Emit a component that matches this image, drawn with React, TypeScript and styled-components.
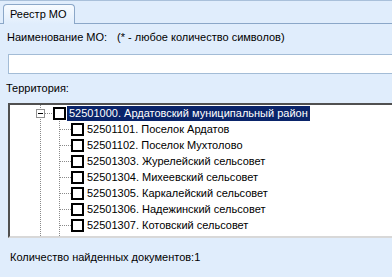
import styled, { createGlobalStyle } from "styled-components";

const GlobalStyle = createGlobalStyle`
  html, body {
    margin: 0;
    padding: 0;
    background: #e0edfc;
    overflow: hidden;
  }
  body {
    font-family: "Liberation Sans", Arial, sans-serif;
    font-size: 11px;
    color: #000;
  }
`;

const dotsV = (x: number) =>
  `repeating-linear-gradient(to bottom, #8a8a8a 0 1px, transparent 1px 2px) ${x}px 0 / 1px 100% no-repeat`;
const dotsH = (x: number, w: number) =>
  `repeating-linear-gradient(to right, #8a8a8a 0 1px, transparent 1px 2px) ${x}px 50% / ${w}px 1px no-repeat`;

const rootItem = "52501000. Ардатовский муниципальный район";
const children = [
  "52501101. Поселок Ардатов",
  "52501102. Поселок Мухтолово",
  "52501303. Журелейский сельсовет",
  "52501304. Михеевский сельсовет",
  "52501305. Каркалейский сельсовет",
  "52501306. Надежинский сельсовет",
  "52501307. Котовский сельсовет",
];

const App = () => {
  return (
    <Window>
      <GlobalStyle />
      <TabStrip>
        <Tab>Реестр МО</Tab>
      </TabStrip>
      <Page>
        <HintRow>
          <FieldLabel>Наименование МО:</FieldLabel>
          <span>(* - любое количество символов)</span>
        </HintRow>
        <SearchInput />
        <SectionLabel>Территория:</SectionLabel>
        <TreePanel>
          <Row>
            <Pad />
            <Expander>
              <ToggleBox>
                <Minus />
              </ToggleBox>
            </Expander>
            <CheckBox />
            <Label selected>{rootItem}</Label>
          </Row>
          {children.map((c) => (
            <Row key={c}>
              <Pad />
              <Guide />
              <Connector />
              <CheckBox />
              <Label>{c}</Label>
            </Row>
          ))}
          <Row>
            <Pad />
            <Guide />
            <Tail />
          </Row>
        </TreePanel>
        <Status>Количество найденных документов:1</Status>
      </Page>
    </Window>
  );
};

export default App;

const Window = styled.div`
  width: 430px;
  height: 277px;
  display: flex;
  flex-direction: column;
`;

const TabStrip = styled.div`
  height: 22px;
  border-top: 1px solid #a9c0da;
  border-bottom: 1px solid #8ba7c8;
  display: flex;
  align-items: flex-end;
  padding-left: 3px;
`;

const Tab = styled.div`
  height: 19px;
  margin-bottom: -1px;
  padding: 0 7px 0 6px;
  border: 1px solid #8ba7c8;
  border-bottom: none;
  border-radius: 4px 4px 0 0;
  background: linear-gradient(to bottom, #f7fbff, #e0edfc);
  line-height: 18px;
`;

const Page = styled.div`
  display: flex;
  flex-direction: column;
  padding-left: 8px;
`;

const HintRow = styled.div`
  display: flex;
  margin-top: 6px;
  line-height: 15px;
  white-space: nowrap;
`;

const FieldLabel = styled.span`
  width: 110px;
  flex: none;
  margin-left: -1px;
`;

const SearchInput = styled.div`
  height: 18px;
  margin-top: 9px;
  background: #fff;
  border: 1px solid #a3bcd6;
  border-right: none;
`;

const SectionLabel = styled.div`
  margin-top: 7px;
  margin-left: -2px;
  line-height: 15px;
`;

const TreePanel = styled.div`
  margin-top: 7px;
  height: 131px;
  overflow: hidden;
  background: #fff;
  border-top: 2px solid #505050;
  border-left: 2px solid #505050;
  border-bottom: 2px solid #d8d8d8;
`;

const Row = styled.div`
  height: 16px;
  display: flex;
  align-items: center;
`;

const Pad = styled.div`
  width: 26px;
  flex: none;
`;

const Expander = styled.div`
  width: 17px;
  height: 100%;
  flex: none;
  display: flex;
  align-items: center;
  background: ${dotsV(4)}, ${dotsH(9, 8)};
`;

const ToggleBox = styled.div`
  width: 7px;
  height: 7px;
  border: 1px solid #919191;
  background: #fff;
  display: flex;
  align-items: center;
  justify-content: center;
`;

const Minus = styled.div`
  width: 5px;
  height: 1px;
  background: #000;
`;

const Guide = styled.div`
  width: 17px;
  height: 100%;
  flex: none;
  background: ${dotsV(4)};
`;

const Connector = styled.div`
  width: 18px;
  height: 100%;
  flex: none;
  background: ${dotsV(6)}, ${dotsH(7, 11)};
`;

const Tail = styled.div`
  width: 18px;
  height: 100%;
  flex: none;
  background: ${dotsV(6)};
`;

const CheckBox = styled.div`
  width: 9px;
  height: 9px;
  flex: none;
  border: 2px solid #000;
  background: #fff;
`;

const Label = styled.span<{ selected?: boolean }>`
  white-space: nowrap;
  line-height: 15px;
  margin-left: ${(p) => (p.selected ? "1px" : "3px")};
  padding: 0 ${(p) => (p.selected ? "2px" : "0")};
  background: ${(p) => (p.selected ? "#0a246a" : "transparent")};
  color: ${(p) => (p.selected ? "#fff" : "#000")};
`;

const Status = styled.div`
  margin-top: 12px;
  margin-left: 2px;
  line-height: 15px;
`;
